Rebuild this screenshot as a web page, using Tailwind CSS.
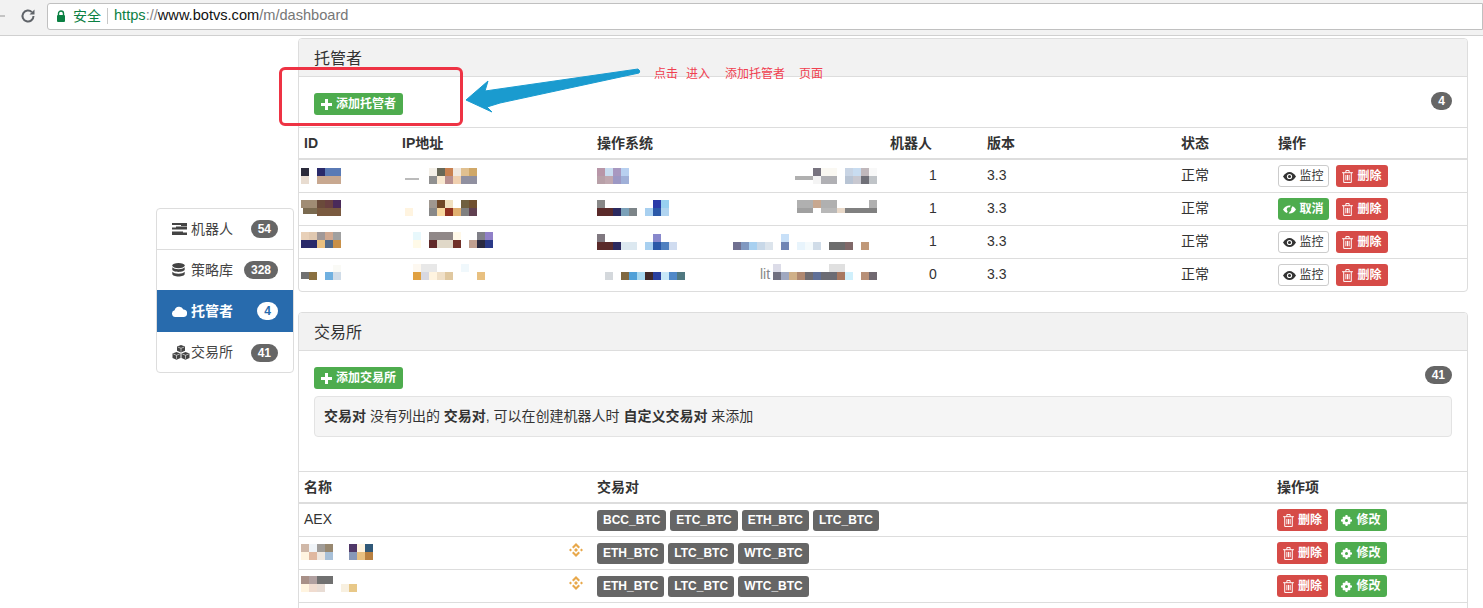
<!DOCTYPE html>
<html lang="zh">
<head>
<meta charset="utf-8">
<title>托管者</title>
<script src="https://cdn.jsdelivr.net/npm/@tailwindcss/browser@4"></script>
</head>
<body class="relative w-[1483px] h-[608px] overflow-hidden bg-white text-[14px] text-[#333] [font-family:'Liberation_Sans','Noto_Sans_CJK_SC',sans-serif]">

<!-- browser bar -->
<header class="h-[36px] bg-[#f2f2f2] border-b border-[#d0d0d0] flex items-center">
  <svg class="block -ml-[9px] -mt-[3px] w-[16px] h-[16px]" viewBox="0 0 16 16" fill="none" stroke="#c4c4c4" stroke-width="2"><path d="M14 8H2M8 2L2 8l6 6"/></svg>
  <svg class="block ml-[13px] -mt-[3px] w-[16px] h-[16px]" viewBox="0 0 16 16" fill="none" stroke="#5f6368" stroke-width="2"><path d="M13.500 8a5.500 5.500 0 1 1-1.600-3.900"/><path d="M14.500 1.500v5h-5z" fill="#5f6368" stroke="none"/></svg>
  <div class="ml-[11px] flex-1 h-[27px] -mt-[3px] bg-white border border-[#c0c0c0] rounded-l-[3px] flex items-center">
    <svg class="block ml-[8px] w-[10px] h-[13px]" viewBox="0 0 10 13"><path d="M2.500 5V3.500a2.500 2.500 0 0 1 5 0V5" fill="none" stroke="#0b8043" stroke-width="1.400"/><rect x="1" y="5" width="8" height="7" rx="1" fill="#0b8043"/></svg>
    <span class="ml-[7px] text-[14px] text-[#0b8043]">安全</span>
    <span class="ml-[6px] w-px h-[16px] bg-[#c8c8c8]"></span>
    <span class="ml-[6px] text-[14.6px]"><span class="text-[#0b8043]">https</span><span class="text-[#888]">://</span><span class="text-[#111]">www.botvs.com</span><span class="text-[#777]">/m/dashboard</span></span>
  </div>
</header>

<div class="flex pl-[156px] gap-[4px]">
  <!-- side nav -->
  <nav class="w-[138px] h-[165px] mt-[172px] shrink-0 border border-[#ddd] rounded-[4px] overflow-hidden text-[14px] text-[#444]">
    <a class="h-[41px] border-b border-[#ddd] flex items-center pl-[15px] pr-[15px]">
      <svg class="w-[15px] h-[12px] shrink-0" viewBox="0 0 15 12" fill="#444"><path d="M0 0h15v3H9V2H0zM0 4.500h4v-1h11v3H0zM0 8.500h11v1h4V12H0z"/></svg>
      <span class="ml-[4px]">机器人</span>
      <span class="ml-auto h-[18px] px-[7px] rounded-full bg-[#666] text-white text-[12px] font-bold leading-[18px]">54</span>
    </a>
    <a class="h-[40px] flex items-center pl-[15px] pr-[15px]">
      <svg class="w-[13px] h-[14px] shrink-0" viewBox="0 0 13 14" fill="#444"><ellipse cx="6.500" cy="2.600" rx="6.200" ry="2.600"/><path d="M.3 4.200v2.300c0 1.300 2.800 2.400 6.200 2.400s6.200-1.100 6.200-2.400V4.200c-1 1.200-3.400 2-6.200 2s-5.200-.8-6.200-2zM.3 8.700v2.300c0 1.400 2.800 2.500 6.200 2.500s6.200-1.100 6.200-2.500V8.700c-1 1.200-3.400 2-6.200 2s-5.200-.8-6.200-2z"/></svg>
      <span class="ml-[6px]">策略库</span>
      <span class="ml-auto h-[18px] px-[7px] rounded-full bg-[#666] text-white text-[12px] font-bold leading-[18px]">328</span>
    </a>
    <a class="h-[42px] bg-[#286bad] text-white font-bold flex items-center pl-[15px] pr-[15px]">
      <svg class="w-[15px] h-[11px] shrink-0" viewBox="0 0 15 11" fill="#fff"><path d="M3.500 11A3.400 3.400 0 0 1 2.600 4.300 4.700 4.700 0 0 1 11.400 3.400 3.800 3.800 0 0 1 11.200 11z"/></svg>
      <span class="ml-[4px]">托管者</span>
      <span class="ml-auto h-[18px] w-[21px] text-center rounded-full bg-white text-[#286bad] text-[12px] font-bold leading-[18px]">4</span>
    </a>
    <a class="h-[40px] border-t border-transparent flex items-center pl-[15px] pr-[15px]">
      <svg class="w-[18px] h-[15px] shrink-0" viewBox="0 0 18 15" fill="#444"><path d="M9 0l4 1.500v4.200L9 7.400 5 5.700V1.500z"/><path d="M4.500 7l4 1.500v4.400l-4 1.800-4-1.800V8.500z"/><path d="M13.500 7l4 1.500v4.400l-4 1.800-4-1.800V8.500z"/><path d="M5.800 2l3.200 1.300L12.200 2M9 3.300v3.500M1.300 9l3.200 1.300L7.700 9M4.500 10.300v3.500M10.300 9l3.200 1.300L16.700 9M13.500 10.300v3.500" fill="none" stroke="#fff" stroke-width=".6"/></svg>
      <span class="ml-px">交易所</span>
      <span class="ml-auto h-[18px] px-[7px] rounded-full bg-[#666] text-white text-[12px] font-bold leading-[18px]">41</span>
    </a>
  </nav>

  <main class="w-[1170px] shrink-0 pt-[2px] flex flex-col gap-[20px]">
    <!-- hosts panel -->
    <section class="h-[254px] border border-[#ddd] rounded-[4px] overflow-hidden">
      <h2 class="h-[38px] bg-[#f2f2f2] border-b border-[#ddd] pl-[15px] text-[16px] leading-[39px] font-normal">托管者</h2>
      <div class="flex justify-between items-start pl-[15px] pr-[15px] pt-[16px] pb-[12px] h-[50px]">
        <button class="h-[22px] w-[89px] rounded-[3px] bg-[#4eac4e] text-white text-[12px] font-bold flex items-center pl-[7px]">
          <svg class="w-[11px] h-[11px] mr-[4px]" viewBox="0 0 11 11" fill="#fff"><path d="M4 0h3v4h4v3H7v4H4V7H0V4h4z"/></svg>添加托管者</button>
        <span class="-mt-[1px] h-[18px] w-[21px] text-center rounded-full bg-[#666] text-white text-[12px] font-bold leading-[18px]">4</span>
      </div>
      <table class="w-full table-fixed border-separate border-spacing-0">
        <colgroup><col class="w-[98px]"><col class="w-[195px]"><col class="w-[294px]"><col class="w-[96px]"><col class="w-[194px]"><col class="w-[97px]"><col></colgroup>
        <thead>
          <tr class="text-left">
            <th class="h-[33px] border-t border-b-2 border-[#ddd] pl-[5px] font-bold">ID</th>
            <th class="border-t border-b-2 border-[#ddd] pl-[5px] font-bold">IP地址</th>
            <th class="border-t border-b-2 border-[#ddd] pl-[5px] font-bold">操作系统</th>
            <th class="border-t border-b-2 border-[#ddd] pl-[4px] font-bold">机器人</th>
            <th class="border-t border-b-2 border-[#ddd] pl-[5px] font-bold">版本</th>
            <th class="border-t border-b-2 border-[#ddd] pl-[5px] font-bold">状态</th>
            <th class="border-t border-b-2 border-[#ddd] pl-[5px] font-bold">操作</th>
          </tr>
        </thead>
        <tbody>
          <tr>
            <td class="h-[33px] border-b border-[#ddd] pl-[5px]"><svg class="block -ml-[3px]" width="45" height="32" viewBox="301 160 45 32" shape-rendering="crispEdges"><rect x="301" y="168" width="8" height="8" fill="#2b2b3b"/><rect x="317" y="168" width="8" height="8" fill="#2a2a6a"/><rect x="325" y="168" width="16" height="8" fill="#5a7ab5"/><rect x="301" y="176" width="8" height="8" fill="#e8dcd0"/><rect x="317" y="176" width="24" height="8" fill="#c8a890"/></svg></td>
            <td class="border-b border-[#ddd] pl-[5px]"><svg class="block" width="80" height="32" viewBox="402 160 80 32" shape-rendering="crispEdges"><rect x="405" y="178" width="14" height="2" fill="#bbb"/><rect x="429" y="168" width="8" height="8" fill="#f4f0e8"/><rect x="437" y="168" width="8" height="8" fill="#686858"/><rect x="445" y="168" width="8" height="8" fill="#c88050"/><rect x="453" y="168" width="8" height="8" fill="#f0e8e0"/><rect x="461" y="168" width="8" height="8" fill="#e0c090"/><rect x="469" y="168" width="8" height="8" fill="#d0a868"/><rect x="429" y="176" width="8" height="8" fill="#909090"/><rect x="437" y="176" width="8" height="8" fill="#f8e8d0"/><rect x="445" y="176" width="8" height="8" fill="#b89090"/><rect x="453" y="176" width="8" height="8" fill="#f0d0b0"/><rect x="461" y="176" width="16" height="8" fill="#9090a0"/></svg></td>
            <td class="border-b border-[#ddd] pl-[5px]"><svg class="block" width="285" height="32" viewBox="597 160 285 32" shape-rendering="crispEdges"><rect x="597" y="168" width="8" height="8" fill="#b896a8"/><rect x="605" y="168" width="8" height="8" fill="#c8dcf0"/><rect x="613" y="168" width="8" height="8" fill="#a898c0"/><rect x="621" y="168" width="8" height="8" fill="#b8d0f0"/><rect x="597" y="176" width="8" height="8" fill="#b8a0a8"/><rect x="605" y="176" width="8" height="8" fill="#c0a8b0"/><rect x="613" y="176" width="8" height="8" fill="#9c98c4"/><rect x="621" y="176" width="8" height="8" fill="#a0b0d8"/><rect x="795" y="176" width="18" height="4" fill="#b0b0b0"/><rect x="813" y="168" width="8" height="8" fill="#787480"/><rect x="821" y="168" width="16" height="8" fill="#faf8f2"/><rect x="845" y="168" width="8" height="8" fill="#c8d4e4"/><rect x="853" y="168" width="8" height="8" fill="#c8dcf0"/><rect x="861" y="168" width="8" height="8" fill="#c0b8bc"/><rect x="869" y="168" width="8" height="8" fill="#f8f8f8"/><rect x="813" y="176" width="8" height="8" fill="#f4f4f4"/><rect x="821" y="176" width="16" height="8" fill="#b0b0b4"/><rect x="845" y="176" width="8" height="8" fill="#b8c4d4"/><rect x="853" y="176" width="8" height="8" fill="#c8c8d0"/><rect x="861" y="176" width="8" height="8" fill="#707078"/><rect x="869" y="176" width="8" height="8" fill="#c0c4c8"/></svg></td>
            <td class="border-b border-[#ddd] pl-[43px] pb-[2px]">1</td>
            <td class="border-b border-[#ddd] pl-[5px] pb-[2px]">3.3</td>
            <td class="border-b border-[#ddd] pl-[5px] pb-[2px]">正常</td>
            <td class="border-b border-[#ddd] pl-[5px]">
              <div class="flex gap-[7px]">
                <button class="h-[22px] w-[51px] rounded-[3px] bg-white border border-[#ccc] text-[#333] text-[12px] flex items-center justify-center"><svg class="w-[13px] h-[9px] mr-[3px]" viewBox="0 0 13 9"><path d="M0 4.500C2 1.500 4 0 6.500 0S11 1.500 13 4.500C11 7.500 9 9 6.500 9S2 7.500 0 4.500z" fill="#333"/><circle cx="6.500" cy="4.500" r="2.600" fill="#fff"/><circle cx="6.500" cy="4.500" r="1.500" fill="#333"/></svg>监控</button>
                <button class="h-[22px] w-[52px] rounded-[3px] bg-[#d64b47] text-white text-[12px] font-bold flex items-center justify-center"><svg class="w-[11px] h-[13px] mr-[4px]" viewBox="0 0 10 12" fill="none" stroke="#fff" stroke-width=".9"><path d="M0 2.500h10M3.500 2.500V.5h3v2M1.500 2.500v9h7v-9M3.500 4.500v5M5 4.500v5M6.500 4.500v5"/></svg>删除</button>
              </div>
            </td>
          </tr>
          <tr>
            <td class="h-[33px] border-b border-[#ddd] pl-[5px]"><svg class="block -ml-[3px]" width="45" height="32" viewBox="301 193 45 32" shape-rendering="crispEdges"><rect x="301" y="200" width="16" height="8" fill="#a08c74"/><rect x="317" y="200" width="8" height="8" fill="#6a4a3a"/><rect x="325" y="200" width="8" height="8" fill="#6a4040"/><rect x="333" y="200" width="8" height="8" fill="#4a2a5a"/><rect x="303" y="208" width="14" height="6" fill="#7a6a50"/><rect x="317" y="208" width="24" height="8" fill="#7a5a40"/></svg></td>
            <td class="border-b border-[#ddd] pl-[5px]"><svg class="block" width="80" height="32" viewBox="402 193 80 32" shape-rendering="crispEdges"><rect x="405" y="208" width="8" height="8" fill="#fff4e0"/><rect x="429" y="200" width="8" height="8" fill="#a09890"/><rect x="437" y="200" width="8" height="8" fill="#704828"/><rect x="445" y="200" width="8" height="8" fill="#f0e0c0"/><rect x="461" y="200" width="8" height="8" fill="#706040"/><rect x="469" y="200" width="8" height="8" fill="#705030"/><rect x="429" y="208" width="8" height="8" fill="#888888"/><rect x="437" y="208" width="8" height="8" fill="#f8d8a0"/><rect x="445" y="208" width="8" height="8" fill="#903020"/><rect x="453" y="208" width="8" height="8" fill="#e0b070"/><rect x="461" y="208" width="8" height="8" fill="#808080"/><rect x="469" y="208" width="8" height="8" fill="#604050"/></svg></td>
            <td class="border-b border-[#ddd] pl-[5px]"><svg class="block" width="285" height="32" viewBox="597 193 285 32" shape-rendering="crispEdges"><rect x="597" y="200" width="8" height="8" fill="#888888"/><rect x="597" y="208" width="16" height="8" fill="#5a2a2a"/><rect x="613" y="208" width="8" height="8" fill="#2c2a60"/><rect x="621" y="208" width="8" height="8" fill="#7aa0b8"/><rect x="629" y="208" width="8" height="8" fill="#7c8488"/><rect x="645" y="208" width="8" height="8" fill="#a8d0f0"/><rect x="653" y="200" width="8" height="8" fill="#2a3aa8"/><rect x="661" y="200" width="8" height="8" fill="#98d0f0"/><rect x="653" y="208" width="8" height="8" fill="#2a58a8"/><rect x="661" y="208" width="8" height="8" fill="#b0d4f0"/><rect x="797" y="200" width="16" height="8" fill="#b0b0b0"/><rect x="813" y="200" width="8" height="8" fill="#c8a890"/><rect x="821" y="200" width="16" height="8" fill="#b0b0b0"/><rect x="869" y="200" width="8" height="8" fill="#b0b0b0"/><rect x="797" y="208" width="16" height="5" fill="#a0a0a0"/><rect x="821" y="208" width="16" height="5" fill="#b8b8b8"/><rect x="837" y="208" width="8" height="5" fill="#e8d8c8"/><rect x="845" y="208" width="32" height="5" fill="#808080"/></svg></td>
            <td class="border-b border-[#ddd] pl-[43px] pb-[2px]">1</td>
            <td class="border-b border-[#ddd] pl-[5px] pb-[2px]">3.3</td>
            <td class="border-b border-[#ddd] pl-[5px] pb-[2px]">正常</td>
            <td class="border-b border-[#ddd] pl-[5px]">
              <div class="flex gap-[7px]">
                <button class="h-[22px] w-[51px] rounded-[3px] bg-[#4eac4e] text-white text-[12px] font-bold flex items-center justify-center"><svg class="w-[13px] h-[11px] mr-[3px]" viewBox="0 0 13 11"><path d="M0 5.500C1.500 3 4 1.500 6.500 1.500S11.500 3 13 5.500C11.500 8 9 9.500 6.500 9.500S1.500 8 0 5.500z" fill="#fff"/><circle cx="6" cy="5.500" r="2.200" fill="#4eac4e"/><path d="M9.500 0L4 11" stroke="#4eac4e" stroke-width="1.800"/></svg>取消</button>
                <button class="h-[22px] w-[52px] rounded-[3px] bg-[#d64b47] text-white text-[12px] font-bold flex items-center justify-center"><svg class="w-[11px] h-[13px] mr-[4px]" viewBox="0 0 10 12" fill="none" stroke="#fff" stroke-width=".9"><path d="M0 2.500h10M3.500 2.500V.5h3v2M1.500 2.500v9h7v-9M3.500 4.500v5M5 4.500v5M6.500 4.500v5"/></svg>删除</button>
              </div>
            </td>
          </tr>
          <tr>
            <td class="h-[33px] border-b border-[#ddd] pl-[5px]"><svg class="block -ml-[3px]" width="45" height="32" viewBox="301 226 45 32" shape-rendering="crispEdges"><rect x="301" y="232" width="8" height="8" fill="#e8d0b8"/><rect x="309" y="232" width="8" height="8" fill="#e0c8b0"/><rect x="317" y="232" width="8" height="8" fill="#a09898"/><rect x="325" y="232" width="8" height="8" fill="#d0a890"/><rect x="333" y="232" width="8" height="8" fill="#a0a0a0"/><rect x="301" y="240" width="16" height="8" fill="#2a2a6a"/><rect x="317" y="240" width="8" height="8" fill="#e8c080"/><rect x="325" y="240" width="8" height="8" fill="#506888"/><rect x="333" y="240" width="8" height="8" fill="#c89048"/></svg></td>
            <td class="border-b border-[#ddd] pl-[5px]"><svg class="block" width="95" height="32" viewBox="402 226 95 32" shape-rendering="crispEdges"><rect x="413" y="232" width="8" height="8" fill="#e8f8fc"/><rect x="413" y="240" width="8" height="8" fill="#fffae8"/><rect x="429" y="232" width="24" height="8" fill="#908888"/><rect x="453" y="232" width="8" height="8" fill="#fff8e8"/><rect x="429" y="240" width="8" height="8" fill="#602828"/><rect x="437" y="240" width="16" height="8" fill="#e0d8c8"/><rect x="453" y="240" width="8" height="8" fill="#703028"/><rect x="469" y="240" width="8" height="8" fill="#c0a090"/><rect x="477" y="232" width="8" height="8" fill="#808088"/><rect x="485" y="232" width="8" height="8" fill="#9080c8"/><rect x="477" y="240" width="8" height="8" fill="#2a2a40"/><rect x="485" y="240" width="8" height="8" fill="#2a3a88"/></svg></td>
            <td class="border-b border-[#ddd] pl-[5px]"><svg class="block" width="285" height="32" viewBox="597 226 285 32" shape-rendering="crispEdges"><rect x="597" y="234" width="8" height="8" fill="#807880"/><rect x="597" y="242" width="16" height="8" fill="#5a2a2a"/><rect x="613" y="242" width="8" height="8" fill="#2c2a60"/><rect x="621" y="242" width="16" height="8" fill="#dce8f0"/><rect x="645" y="242" width="8" height="8" fill="#a8d0f0"/><rect x="653" y="234" width="8" height="8" fill="#8888cc"/><rect x="653" y="242" width="8" height="8" fill="#2a58a8"/><rect x="661" y="242" width="8" height="8" fill="#5080c0"/><rect x="669" y="242" width="8" height="8" fill="#d0dcf0"/><rect x="733" y="242" width="8" height="8" fill="#707090"/><rect x="741" y="242" width="8" height="8" fill="#8098c0"/><rect x="749" y="242" width="8" height="8" fill="#a8d0f0"/><rect x="757" y="242" width="8" height="8" fill="#c8d8e8"/><rect x="765" y="242" width="8" height="8" fill="#dce4ec"/><rect x="781" y="234" width="8" height="8" fill="#c8e0f8"/><rect x="781" y="242" width="8" height="8" fill="#6f85b5"/><rect x="797" y="242" width="8" height="8" fill="#e8f4fc"/><rect x="805" y="242" width="8" height="8" fill="#f4fafc"/><rect x="813" y="242" width="8" height="8" fill="#d0dce8"/><rect x="829" y="242" width="16" height="8" fill="#6c6c6c"/><rect x="845" y="242" width="8" height="8" fill="#806868"/><rect x="861" y="242" width="8" height="8" fill="#c09878"/></svg></td>
            <td class="border-b border-[#ddd] pl-[43px] pb-[2px]">1</td>
            <td class="border-b border-[#ddd] pl-[5px] pb-[2px]">3.3</td>
            <td class="border-b border-[#ddd] pl-[5px] pb-[2px]">正常</td>
            <td class="border-b border-[#ddd] pl-[5px]">
              <div class="flex gap-[7px]">
                <button class="h-[22px] w-[51px] rounded-[3px] bg-white border border-[#ccc] text-[#333] text-[12px] flex items-center justify-center"><svg class="w-[13px] h-[9px] mr-[3px]" viewBox="0 0 13 9"><path d="M0 4.500C2 1.500 4 0 6.500 0S11 1.500 13 4.500C11 7.500 9 9 6.500 9S2 7.500 0 4.500z" fill="#333"/><circle cx="6.500" cy="4.500" r="2.600" fill="#fff"/><circle cx="6.500" cy="4.500" r="1.500" fill="#333"/></svg>监控</button>
                <button class="h-[22px] w-[52px] rounded-[3px] bg-[#d64b47] text-white text-[12px] font-bold flex items-center justify-center"><svg class="w-[11px] h-[13px] mr-[4px]" viewBox="0 0 10 12" fill="none" stroke="#fff" stroke-width=".9"><path d="M0 2.500h10M3.500 2.500V.5h3v2M1.500 2.500v9h7v-9M3.500 4.500v5M5 4.500v5M6.500 4.500v5"/></svg>删除</button>
              </div>
            </td>
          </tr>
          <tr>
            <td class="h-[32px] pl-[5px]"><svg class="block -ml-[3px]" width="45" height="32" viewBox="301 259 45 32" shape-rendering="crispEdges"><rect x="333" y="265" width="8" height="7" fill="#fafaf6"/><rect x="301" y="272" width="8" height="7" fill="#707070"/><rect x="309" y="272" width="8" height="8" fill="#8a7040"/><rect x="325" y="272" width="8" height="8" fill="#70b0e0"/><rect x="333" y="272" width="8" height="8" fill="#d0dce8"/></svg></td>
            <td class="pl-[5px]"><svg class="block" width="90" height="32" viewBox="402 259 90 32" shape-rendering="crispEdges"><rect x="413" y="264" width="8" height="8" fill="#fdf8f0"/><rect x="421" y="264" width="16" height="8" fill="#e8e8e8"/><rect x="461" y="264" width="8" height="8" fill="#f0f8fc"/><rect x="413" y="272" width="8" height="8" fill="#e0a040"/><rect x="421" y="272" width="8" height="8" fill="#d8d8e0"/><rect x="429" y="272" width="8" height="8" fill="#fff4e0"/><rect x="437" y="272" width="8" height="8" fill="#f0e0c8"/><rect x="445" y="272" width="8" height="8" fill="#e0c8a0"/><rect x="477" y="272" width="8" height="8" fill="#e8c080"/></svg></td>
            <td class="pl-[5px]"><svg class="block" width="285" height="32" viewBox="597 259 285 32" shape-rendering="crispEdges"><rect x="605" y="272" width="8" height="8" fill="#d4d8dc"/><rect x="621" y="272" width="8" height="8" fill="#806840"/><rect x="629" y="272" width="8" height="8" fill="#50a0d8"/><rect x="637" y="272" width="8" height="8" fill="#a8d8f0"/><rect x="645" y="272" width="8" height="8" fill="#402828"/><rect x="653" y="272" width="8" height="8" fill="#2a40a0"/><rect x="661" y="272" width="8" height="8" fill="#c8e8f8"/><rect x="669" y="272" width="8" height="8" fill="#5088c8"/><rect x="677" y="272" width="8" height="8" fill="#507880"/><text x="760" y="279" font-size="14" fill="#888">lit</text><rect x="773" y="264" width="8" height="8" fill="#dcdce8"/><rect x="829" y="264" width="16" height="8" fill="#e0e0e0"/><rect x="773" y="272" width="8" height="8" fill="#707080"/><rect x="781" y="272" width="8" height="8" fill="#a0a8c0"/><rect x="789" y="272" width="8" height="8" fill="#d0b088"/><rect x="797" y="272" width="8" height="8" fill="#b08870"/><rect x="805" y="272" width="8" height="8" fill="#706c70"/><rect x="813" y="272" width="8" height="8" fill="#607098"/><rect x="821" y="272" width="16" height="8" fill="#6c6c74"/><rect x="837" y="272" width="8" height="8" fill="#a87860"/><rect x="845" y="272" width="8" height="8" fill="#d0f0fc"/><rect x="861" y="272" width="8" height="8" fill="#b89078"/><rect x="869" y="272" width="8" height="8" fill="#706870"/></svg></td>
            <td class="pl-[43px] pb-[2px]">0</td>
            <td class="pl-[5px] pb-[2px]">3.3</td>
            <td class="pl-[5px] pb-[2px]">正常</td>
            <td class="pl-[5px]">
              <div class="flex gap-[7px]">
                <button class="h-[22px] w-[51px] rounded-[3px] bg-white border border-[#ccc] text-[#333] text-[12px] flex items-center justify-center"><svg class="w-[13px] h-[9px] mr-[3px]" viewBox="0 0 13 9"><path d="M0 4.500C2 1.500 4 0 6.500 0S11 1.500 13 4.500C11 7.500 9 9 6.500 9S2 7.500 0 4.500z" fill="#333"/><circle cx="6.500" cy="4.500" r="2.600" fill="#fff"/><circle cx="6.500" cy="4.500" r="1.500" fill="#333"/></svg>监控</button>
                <button class="h-[22px] w-[52px] rounded-[3px] bg-[#d64b47] text-white text-[12px] font-bold flex items-center justify-center"><svg class="w-[11px] h-[13px] mr-[4px]" viewBox="0 0 10 12" fill="none" stroke="#fff" stroke-width=".9"><path d="M0 2.500h10M3.500 2.500V.5h3v2M1.500 2.500v9h7v-9M3.500 4.500v5M5 4.500v5M6.500 4.500v5"/></svg>删除</button>
              </div>
            </td>
          </tr>
        </tbody>
      </table>
    </section>

    <!-- exchanges panel -->
    <section class="h-[400px] border border-[#ddd] rounded-[4px] overflow-hidden shrink-0">
      <h2 class="h-[38px] bg-[#f2f2f2] border-b border-[#ddd] pl-[15px] text-[16px] leading-[39px] font-normal">交易所</h2>
      <div class="pl-[15px] pr-[15px] pt-[16px] h-[120px]">
        <div class="flex justify-between items-start">
          <button class="h-[22px] w-[89px] rounded-[3px] bg-[#4eac4e] text-white text-[12px] font-bold flex items-center pl-[7px]">
            <svg class="w-[11px] h-[11px] mr-[4px]" viewBox="0 0 11 11" fill="#fff"><path d="M4 0h3v4h4v3H7v4H4V7H0V4h4z"/></svg>添加交易所</button>
          <span class="-mt-[1px] h-[18px] px-[7px] rounded-full bg-[#666] text-white text-[12px] font-bold leading-[18px]">41</span>
        </div>
        <div class="mt-[7px] h-[41px] bg-[#f5f5f5] border border-[#e3e3e3] rounded-[4px] pl-[9px] flex items-center">
          <p><b>交易对</b> 没有列出的 <b>交易对</b>, 可以在创建机器人时 <b>自定义交易对</b> 来添加</p>
        </div>
      </div>
      <table class="w-full table-fixed border-separate border-spacing-0">
        <colgroup><col class="w-[293px]"><col class="w-[680px]"><col></colgroup>
        <thead>
          <tr class="text-left">
            <th class="h-[33px] border-t border-b-2 border-[#ddd] pl-[5px] font-bold">名称</th>
            <th class="border-t border-b-2 border-[#ddd] pl-[5px] font-bold">交易对</th>
            <th class="border-t border-b-2 border-[#ddd] pl-[5px] font-bold">操作项</th>
          </tr>
        </thead>
        <tbody>
          <tr>
            <td class="h-[33px] border-b border-[#ddd] pl-[5px] pb-[2px]">AEX</td>
            <td class="border-b border-[#ddd] pl-[5px]">
              <div class="flex gap-[4px] text-[12px] font-bold text-white">
                <span class="h-[21px] px-[6px] rounded-[3px] bg-[#666] leading-[21px]">BCC_BTC</span>
                <span class="h-[21px] px-[6px] rounded-[3px] bg-[#666] leading-[21px]">ETC_BTC</span>
                <span class="h-[21px] px-[6px] rounded-[3px] bg-[#666] leading-[21px]">ETH_BTC</span>
                <span class="h-[21px] px-[6px] rounded-[3px] bg-[#666] leading-[21px]">LTC_BTC</span>
              </div>
            </td>
            <td class="border-b border-[#ddd] pl-[5px]">
              <div class="flex gap-[7px]">
                <button class="h-[22px] w-[51px] rounded-[3px] bg-[#d64b47] text-white text-[12px] font-bold flex items-center justify-center"><svg class="w-[11px] h-[13px] mr-[4px]" viewBox="0 0 10 12" fill="none" stroke="#fff" stroke-width=".9"><path d="M0 2.500h10M3.500 2.500V.5h3v2M1.500 2.500v9h7v-9M3.500 4.500v5M5 4.500v5M6.500 4.500v5"/></svg>删除</button>
                <button class="h-[22px] w-[52px] rounded-[3px] bg-[#4eac4e] text-white text-[12px] font-bold flex items-center justify-center"><svg class="w-[11px] h-[11px] mr-[4px]" viewBox="0 0 11 11"><circle cx="5.500" cy="5.500" r="3.200" fill="none" stroke="#fff" stroke-width="2.200"/><path d="M4.500 0h2v11h-2zM0 4.500h11v2H0zM1.400 2.800l1.400-1.400 6.800 6.800-1.400 1.400zM8.200 1.400l1.400 1.400-6.800 6.800-1.400-1.400z" fill="#fff"/><circle cx="5.500" cy="5.500" r="1.500" fill="#4eac4e"/></svg>修改</button>
              </div>
            </td>
          </tr>
          <tr>
            <td class="h-[33px] border-b border-[#ddd] pl-[5px]">
              <div class="flex items-center justify-between -ml-[3px] pr-[6px]">
                <svg class="block" width="75" height="32" viewBox="301 537 75 32" shape-rendering="crispEdges"><rect x="301" y="544" width="8" height="8" fill="#d0b8a8"/><rect x="309" y="544" width="8" height="8" fill="#f0f4f8"/><rect x="317" y="544" width="8" height="8" fill="#a09c98"/><rect x="325" y="544" width="8" height="8" fill="#988870"/><rect x="349" y="544" width="8" height="8" fill="#503868"/><rect x="357" y="544" width="8" height="8" fill="#fff4e0"/><rect x="365" y="544" width="8" height="8" fill="#305878"/><rect x="301" y="552" width="8" height="8" fill="#fff4e0"/><rect x="309" y="552" width="8" height="8" fill="#e0b8a0"/><rect x="317" y="552" width="8" height="8" fill="#f0e8e0"/><rect x="325" y="552" width="8" height="8" fill="#a8c0d8"/><rect x="349" y="552" width="8" height="8" fill="#8898b8"/><rect x="357" y="552" width="8" height="8" fill="#e8c080"/><rect x="365" y="552" width="8" height="8" fill="#b88040"/></svg>
                <svg class="block -mt-[6px] mr-[3px]" width="14" height="14" viewBox="0 0 14 14" fill="#e8a84a"><path d="M7 0l4 4-1.500 1.500L7 3 4.500 5.500 3 4zM7 14l-4-4 1.500-1.500L7 11l2.500-2.500L11 10zM1.500 5.500L3 7 1.500 8.500 0 7zM12.500 5.500L14 7l-1.500 1.500L11 7zM7 5l2 2-2 2-2-2z"/></svg>
              </div>
            </td>
            <td class="border-b border-[#ddd] pl-[5px]">
              <div class="flex gap-[4px] text-[12px] font-bold text-white">
                <span class="h-[21px] px-[6px] rounded-[3px] bg-[#666] leading-[21px]">ETH_BTC</span>
                <span class="h-[21px] px-[6px] rounded-[3px] bg-[#666] leading-[21px]">LTC_BTC</span>
                <span class="h-[21px] px-[6px] rounded-[3px] bg-[#666] leading-[21px]">WTC_BTC</span>
              </div>
            </td>
            <td class="border-b border-[#ddd] pl-[5px]">
              <div class="flex gap-[7px]">
                <button class="h-[22px] w-[51px] rounded-[3px] bg-[#d64b47] text-white text-[12px] font-bold flex items-center justify-center"><svg class="w-[11px] h-[13px] mr-[4px]" viewBox="0 0 10 12" fill="none" stroke="#fff" stroke-width=".9"><path d="M0 2.500h10M3.500 2.500V.5h3v2M1.500 2.500v9h7v-9M3.500 4.500v5M5 4.500v5M6.500 4.500v5"/></svg>删除</button>
                <button class="h-[22px] w-[52px] rounded-[3px] bg-[#4eac4e] text-white text-[12px] font-bold flex items-center justify-center"><svg class="w-[11px] h-[11px] mr-[4px]" viewBox="0 0 11 11"><circle cx="5.500" cy="5.500" r="3.200" fill="none" stroke="#fff" stroke-width="2.200"/><path d="M4.500 0h2v11h-2zM0 4.500h11v2H0zM1.400 2.800l1.400-1.400 6.800 6.800-1.400 1.400zM8.200 1.400l1.400 1.400-6.800 6.800-1.400-1.400z" fill="#fff"/><circle cx="5.500" cy="5.500" r="1.500" fill="#4eac4e"/></svg>修改</button>
              </div>
            </td>
          </tr>
          <tr>
            <td class="h-[33px] border-b border-[#ddd] pl-[5px]">
              <div class="flex items-center justify-between -ml-[3px] pr-[6px]">
                <svg class="block" width="75" height="32" viewBox="301 570 75 32" shape-rendering="crispEdges"><rect x="301" y="576" width="8" height="8" fill="#a89088"/><rect x="309" y="576" width="8" height="8" fill="#b0a0a0"/><rect x="317" y="576" width="16" height="8" fill="#707070"/><rect x="301" y="584" width="8" height="8" fill="#fff4e0"/><rect x="309" y="584" width="8" height="8" fill="#f0dcd0"/><rect x="317" y="584" width="8" height="8" fill="#e8dcd4"/><rect x="341" y="584" width="8" height="8" fill="#f8f0e0"/><rect x="349" y="584" width="8" height="8" fill="#e8c888"/></svg>
                <svg class="block -mt-[6px] mr-[3px]" width="14" height="14" viewBox="0 0 14 14" fill="#e8a84a"><path d="M7 0l4 4-1.500 1.500L7 3 4.500 5.500 3 4zM7 14l-4-4 1.500-1.500L7 11l2.500-2.500L11 10zM1.500 5.500L3 7 1.500 8.500 0 7zM12.500 5.500L14 7l-1.500 1.500L11 7zM7 5l2 2-2 2-2-2z"/></svg>
              </div>
            </td>
            <td class="border-b border-[#ddd] pl-[5px]">
              <div class="flex gap-[4px] text-[12px] font-bold text-white">
                <span class="h-[21px] px-[6px] rounded-[3px] bg-[#666] leading-[21px]">ETH_BTC</span>
                <span class="h-[21px] px-[6px] rounded-[3px] bg-[#666] leading-[21px]">LTC_BTC</span>
                <span class="h-[21px] px-[6px] rounded-[3px] bg-[#666] leading-[21px]">WTC_BTC</span>
              </div>
            </td>
            <td class="border-b border-[#ddd] pl-[5px]">
              <div class="flex gap-[7px]">
                <button class="h-[22px] w-[51px] rounded-[3px] bg-[#d64b47] text-white text-[12px] font-bold flex items-center justify-center"><svg class="w-[11px] h-[13px] mr-[4px]" viewBox="0 0 10 12" fill="none" stroke="#fff" stroke-width=".9"><path d="M0 2.500h10M3.500 2.500V.5h3v2M1.500 2.500v9h7v-9M3.500 4.500v5M5 4.500v5M6.500 4.500v5"/></svg>删除</button>
                <button class="h-[22px] w-[52px] rounded-[3px] bg-[#4eac4e] text-white text-[12px] font-bold flex items-center justify-center"><svg class="w-[11px] h-[11px] mr-[4px]" viewBox="0 0 11 11"><circle cx="5.500" cy="5.500" r="3.200" fill="none" stroke="#fff" stroke-width="2.200"/><path d="M4.500 0h2v11h-2zM0 4.500h11v2H0zM1.400 2.800l1.400-1.400 6.800 6.800-1.400 1.400zM8.200 1.400l1.400 1.400-6.800 6.800-1.400-1.400z" fill="#fff"/><circle cx="5.500" cy="5.500" r="1.500" fill="#4eac4e"/></svg>修改</button>
              </div>
            </td>
          </tr>
        </tbody>
      </table>
    </section>
  </main>
</div>

<!-- annotations drawn over the screenshot -->
<div class="absolute left-[279px] top-[67px] w-[184px] h-[59px] border-[3px] border-[#ee3344] rounded-[6px]"></div>
<svg class="absolute left-[460px] top-[60px]" width="190" height="60" viewBox="460 60 190 60"><path d="M466 100L488 81 485 91 638 69Q641 71 639 73L500 103 487 107 492 112z" fill="#1a9bcf" stroke="#1a9bcf" stroke-width="1" stroke-linejoin="round"/></svg>
<div class="absolute left-[654px] top-[67px] flex text-[12px] leading-[15px] text-[#f04050]"><span>点击</span><span class="ml-[8px]">进入</span><span class="ml-[15px]">添加托管者</span><span class="ml-[14px]">页面</span></div>
</body>
</html>
